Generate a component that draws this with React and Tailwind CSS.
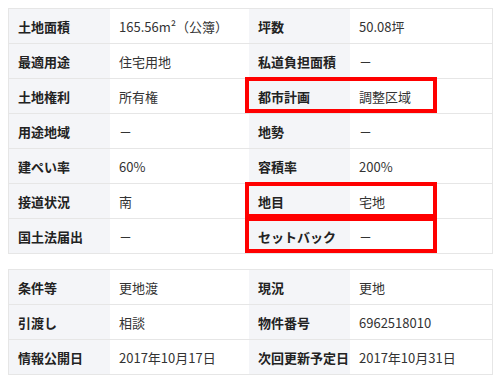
import React from 'react';

const mainRows = [
    ['土地面積', '165.56m²（公簿）', '坪数', '50.08坪'],
    ['最適用途', '住宅用地', '私道負担面積', '－'],
    ['土地権利', '所有権', '都市計画', '調整区域'],
    ['用途地域', '－', '地勢', '－'],
    ['建ぺい率', '60%', '容積率', '200%'],
    ['接道状況', '南', '地目', '宅地'],
    ['国土法届出', '－', 'セットバック', '－'],
];

const subRows = [
    ['条件等', '更地渡', '現況', '更地'],
    ['引渡し', '相談', '物件番号', '6962518010'],
    ['情報公開日', '2017年10月17日', '次回更新予定日', '2017年10月31日'],
];

// rows that get the red highlight box
const marked = [2, 5, 6];

const InfoTable = ({ rows, highlight = [] }) => {
    return (
        <div className="relative border border-b-0 border-[#e6e6e6] bg-white">
            {rows.map((row, index) => (
                <div key={index} className="grid grid-cols-[101px_139px_101px_139px] h-[35px] border-b border-[#e6e6e6]">
                    <div className="flex items-center pl-[9px] bg-[#f4f5f8] font-bold text-[#222]">{row[0]}</div>
                    <div className="flex items-center pl-[9px] text-[#333]">{row[1]}</div>
                    <div className="flex items-center pl-[9px] bg-[#f4f5f8] font-bold text-[#222]">{row[2]}</div>
                    <div className="flex items-center pl-[9px] text-[#333]">{row[3]}</div>
                </div>
            ))}
            {highlight.map((i) => (
                <div
                    key={i}
                    className="absolute left-[236px] w-[192px] h-[36px] border-4 border-[#f00] pointer-events-none"
                    style={{ top: i * 35 - 2 }}
                />
            ))}
        </div>
    );
};

const App = () => {
    return (
        <div
            className="w-[501px] h-[385px] bg-white p-2 text-[13px] leading-none"
            style={{ fontFamily: '"Noto Sans CJK JP", "Noto Sans", sans-serif' }}
        >
            <InfoTable rows={mainRows} highlight={marked} />
            <div className="mt-[15px]">
                <InfoTable rows={subRows} />
            </div>
        </div>
    );
};

export default App;
